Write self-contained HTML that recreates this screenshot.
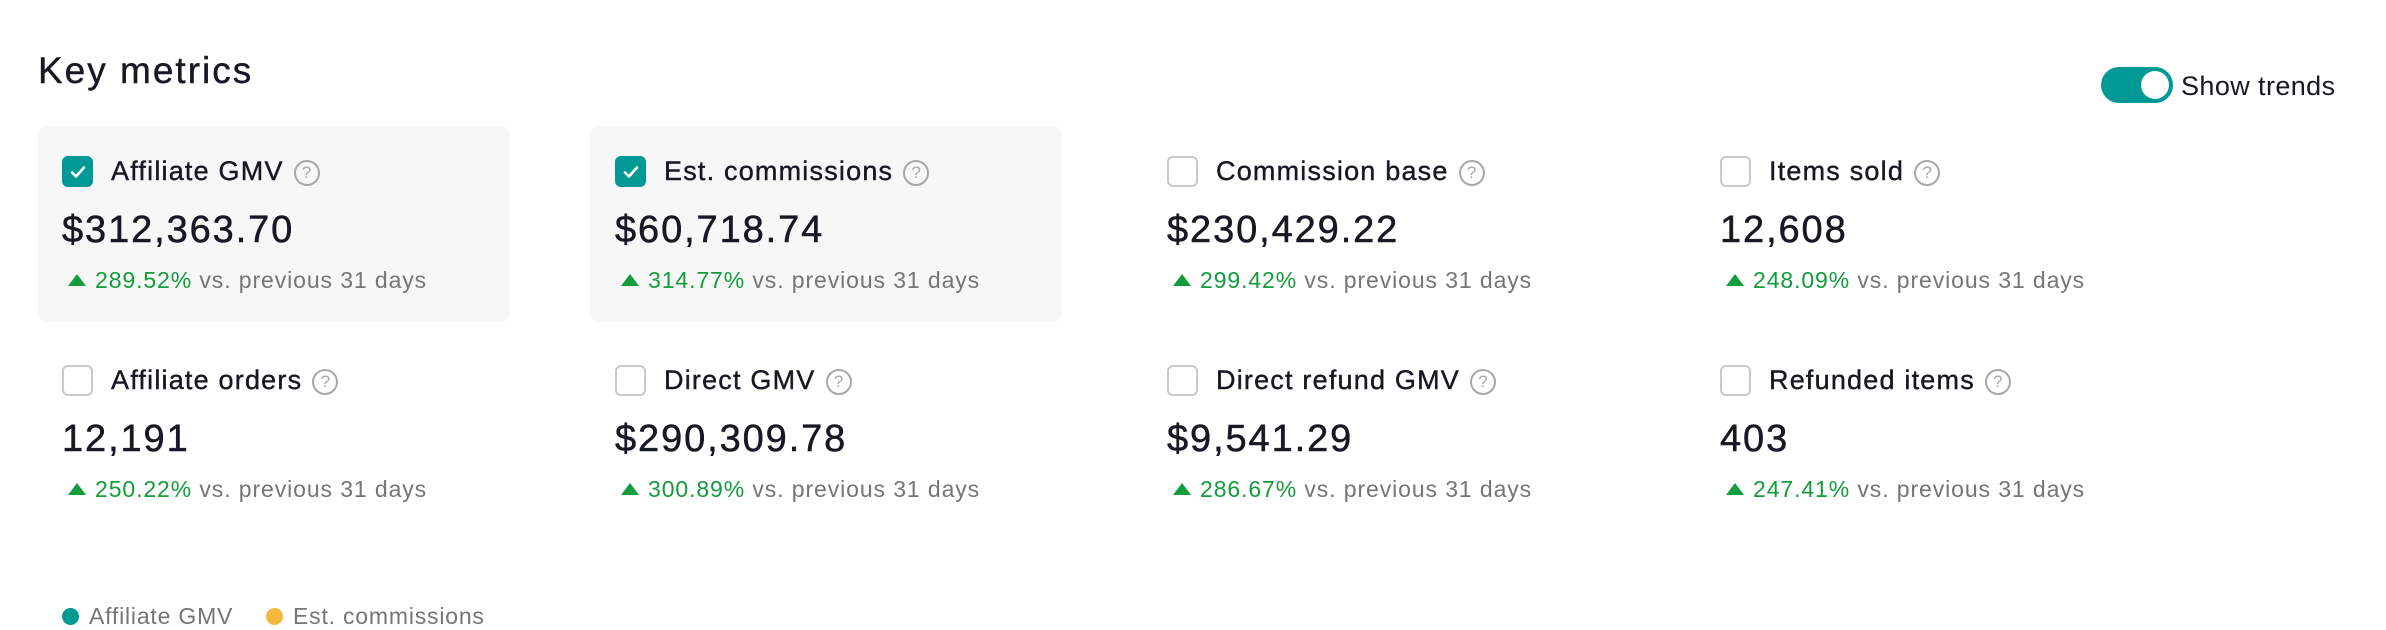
<!DOCTYPE html>
<html><head><meta charset="utf-8"><style>
*{margin:0;padding:0;box-sizing:border-box}
body{width:2386px;height:608px;background:#fff;font-family:"Liberation Sans",sans-serif;color:#161823;position:relative;overflow:hidden}
.t{position:absolute;left:38px;top:50px;font-size:37px;white-space:nowrap;letter-spacing:2px;-webkit-text-stroke:0.4px #161823}
.card{position:absolute;top:126px;width:472px;height:196px;background:#f7f7f7;border-radius:9px}
.m{position:absolute;width:540px;white-space:nowrap}
.cb{position:absolute;left:0;top:0;width:31px;height:31px;border:2px solid #c9c9cc;border-radius:6px;background:#fff}
.cb.on{background:#009995;border-color:#009995}
.cb.on svg{position:absolute;left:6px;top:7px}
.lb{position:absolute;left:49px;top:-1px;font-size:27px;line-height:32px;letter-spacing:1.2px;-webkit-text-stroke:0.4px #161823}
.q{display:inline-block;width:26px;height:26px;border:2px solid #a8a8ab;border-radius:50%;color:#a8a8ab;font-size:17px;line-height:22px;text-align:center;vertical-align:2px;margin-left:10px;letter-spacing:0;-webkit-text-stroke:0}
.v{position:absolute;left:0;top:52px;font-size:38px;line-height:44px;letter-spacing:1.9px;-webkit-text-stroke:0.5px #161823}
.tr{position:absolute;left:6px;top:110px;font-size:23px;line-height:28px;color:#757575;letter-spacing:0.9px}
.tr .g{color:#129c3c}
.tr .a{display:inline-block;width:0;height:0;border-left:9px solid transparent;border-right:9px solid transparent;border-bottom:12px solid #129c3c;margin-right:9px;vertical-align:2px}
.tg{position:absolute;left:2101px;top:67px;width:72px;height:36px;border-radius:18px;background:#009995}
.tg::after{content:"";position:absolute;right:4px;top:4px;width:28px;height:28px;border-radius:50%;background:#fff}
.st{position:absolute;left:2181px;top:70px;font-size:27px;line-height:32px;letter-spacing:0.4px}
.lg{position:absolute;top:603px;font-size:23px;color:#757575;white-space:nowrap;letter-spacing:0.8px}
.dot{display:inline-block;width:17px;height:17px;border-radius:50%;margin-right:10px;vertical-align:-1px}
</style></head><body>
<div class="t">Key metrics</div>
<div class="tg"></div><div class="st">Show trends</div>
<div class="card" style="left:38px"></div>
<div class="card" style="left:590px"></div>

<div class="m" style="left:62px;top:156px"><div class="cb on"><svg width="16" height="14" viewBox="0 0 16 14"><path d="M2 7.5l4 4 8-9" stroke="#fff" stroke-width="2.6" fill="none" stroke-linecap="round" stroke-linejoin="round"/></svg></div><div class="lb">Affiliate GMV<span class="q">?</span></div><div class="v">$312,363.70</div><div class="tr"><span class="a"></span><span class="g">289.52%</span> vs. previous 31 days</div></div>
<div class="m" style="left:615px;top:156px"><div class="cb on"><svg width="16" height="14" viewBox="0 0 16 14"><path d="M2 7.5l4 4 8-9" stroke="#fff" stroke-width="2.6" fill="none" stroke-linecap="round" stroke-linejoin="round"/></svg></div><div class="lb">Est. commissions<span class="q">?</span></div><div class="v">$60,718.74</div><div class="tr"><span class="a"></span><span class="g">314.77%</span> vs. previous 31 days</div></div>
<div class="m" style="left:1167px;top:156px"><div class="cb"></div><div class="lb">Commission base<span class="q">?</span></div><div class="v">$230,429.22</div><div class="tr"><span class="a"></span><span class="g">299.42%</span> vs. previous 31 days</div></div>
<div class="m" style="left:1720px;top:156px"><div class="cb"></div><div class="lb">Items sold<span class="q">?</span></div><div class="v">12,608</div><div class="tr"><span class="a"></span><span class="g">248.09%</span> vs. previous 31 days</div></div>

<div class="m" style="left:62px;top:365px"><div class="cb"></div><div class="lb">Affiliate orders<span class="q">?</span></div><div class="v">12,191</div><div class="tr"><span class="a"></span><span class="g">250.22%</span> vs. previous 31 days</div></div>
<div class="m" style="left:615px;top:365px"><div class="cb"></div><div class="lb">Direct GMV<span class="q">?</span></div><div class="v">$290,309.78</div><div class="tr"><span class="a"></span><span class="g">300.89%</span> vs. previous 31 days</div></div>
<div class="m" style="left:1167px;top:365px"><div class="cb"></div><div class="lb">Direct refund GMV<span class="q">?</span></div><div class="v">$9,541.29</div><div class="tr"><span class="a"></span><span class="g">286.67%</span> vs. previous 31 days</div></div>
<div class="m" style="left:1720px;top:365px"><div class="cb"></div><div class="lb">Refunded items<span class="q">?</span></div><div class="v">403</div><div class="tr"><span class="a"></span><span class="g">247.41%</span> vs. previous 31 days</div></div>

<div class="lg" style="left:62px"><span class="dot" style="background:#009995"></span>Affiliate GMV</div>
<div class="lg" style="left:266px"><span class="dot" style="background:#f5b83d"></span>Est. commissions</div>
</body></html>
